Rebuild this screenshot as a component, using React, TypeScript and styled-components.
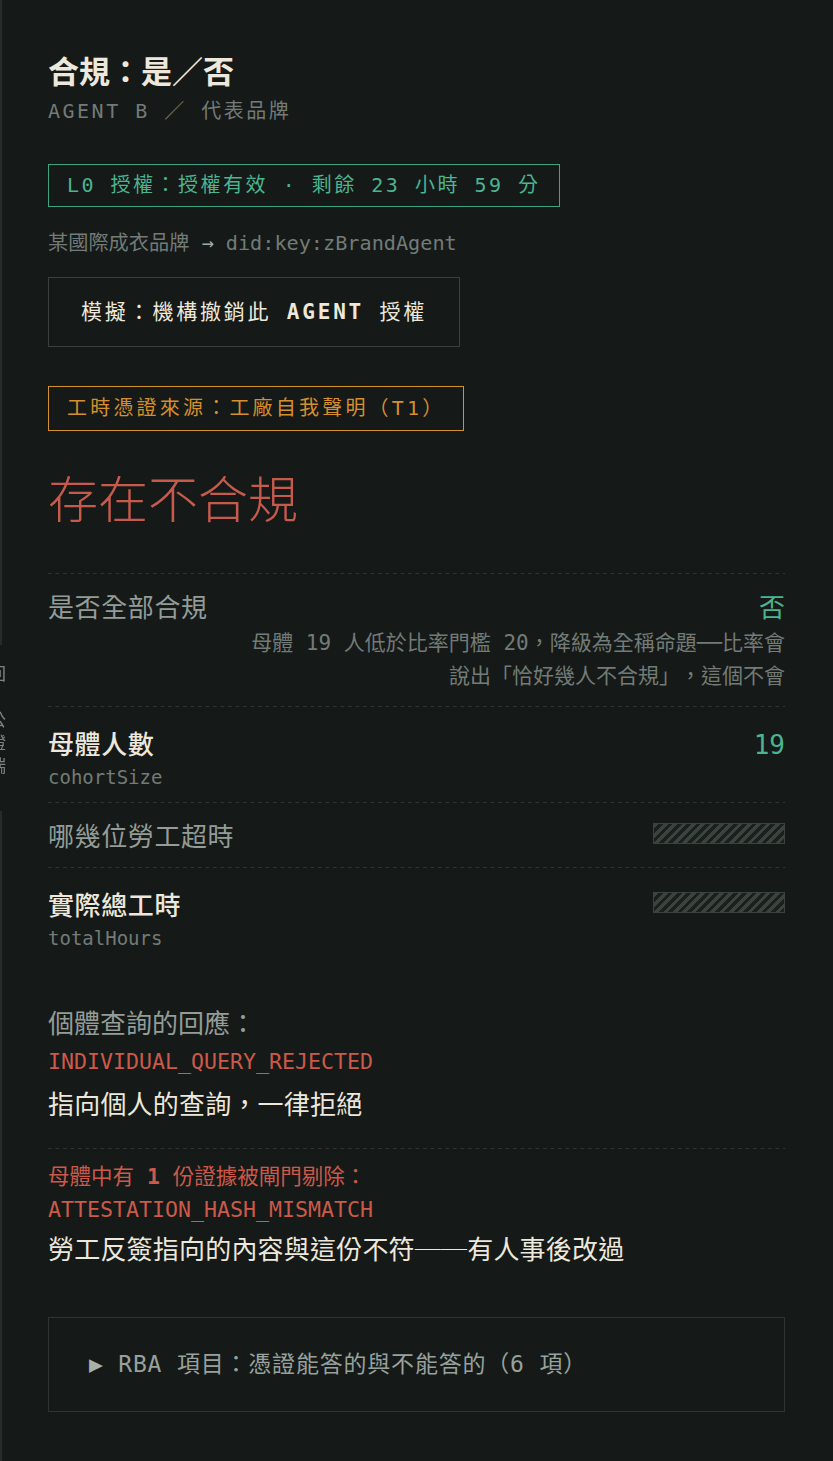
import styled, { createGlobalStyle } from 'styled-components'

const mono = `"DejaVu Sans Mono", "Noto Sans CJK TC", monospace`
const cjk = `"Noto Sans CJK TC", "Noto Sans", sans-serif`

const c = {
  bg: '#151918',
  text: '#ede8db',
  muted: '#939c97',
  dim: '#737b77',
  green: '#4cb48f',
  orange: '#d68f2c',
  red: '#cc5a49',
  dash: '#2f3533',
  border: '#3a403e',
}

const GlobalStyle = createGlobalStyle`
  * { box-sizing: border-box; }
  html, body { margin: 0; padding: 0; background: ${c.bg}; }
  body {
    font-family: ${mono};
    color: ${c.text};
    text-spacing-trim: space-all;
  }
`

const SideRail = styled.aside`
  position: fixed;
  left: 0;
  top: 0;
  bottom: 0;
  width: 2px;
  background: #272c2a;
`

const RailTab = styled.button`
  position: fixed;
  left: -13px;
  top: 645px;
  width: 21px;
  height: 166px;
  padding: 20px 0 0;
  border: 0;
  background: ${c.bg};
  color: #7d8581;
  font: 17px/21px ${cjk};
  letter-spacing: 6px;
  writing-mode: vertical-rl;
  text-align: start;
`

const RailDot = styled.span`
  color: ${c.red};
`

const Page = styled.main`
  display: flex;
  flex-direction: column;
  padding: 52px 48px 60px;
`

const Title = styled.h1`
  margin: 0;
  font-size: 31px;
  line-height: 40px;
  font-weight: 700;
  color: ${c.text};
`

const Subtitle = styled.div`
  margin-top: 5px;
  font-size: 20px;
  line-height: 28px;
  letter-spacing: 2.5px;
  color: ${c.dim};
`

const Badge = styled.div<{ $tone: 'green' | 'orange' }>`
  align-self: flex-start;
  margin-top: 39px;
  padding: ${p => (p.$tone === 'green' ? '8px 18px' : '9px 18px')};
  border: 1px solid ${p => (p.$tone === 'green' ? '#3fa384' : '#d4922d')};
  color: ${p => (p.$tone === 'green' ? c.green : c.orange)};
  font-size: 20px;
  line-height: 25px;
  letter-spacing: ${p => (p.$tone === 'green' ? 2.5 : 3.2)}px;
`

const Identity = styled.div`
  margin-top: 21px;
  font-size: 20.2px;
  line-height: 30px;
  color: ${c.dim};
`

const Arrow = styled.span`
  color: #a2aaa6;
`

const RevokeButton = styled.button`
  align-self: flex-start;
  margin-top: 19px;
  padding: 20px 32px;
  background: transparent;
  border: 1px solid ${c.border};
  color: ${c.text};
  font-family: ${mono};
  font-size: 21px;
  line-height: 28px;
  letter-spacing: 2.8px;
  cursor: pointer;
`

const Strong = styled.b`
  font-weight: 700;
`

const Verdict = styled.div`
  margin-top: 38px;
  font-size: 50px;
  line-height: 64px;
  font-weight: 300;
  color: #c65a4b;
`

const Rows = styled.section`
  margin-top: 40px;
  display: flex;
  flex-direction: column;
`

const dashedTop = `
  background-image: linear-gradient(to right, ${c.dash} 4px, transparent 4px);
  background-size: 7.5px 1px;
  background-repeat: repeat-x;
  background-position: left top;
`

const Row = styled.div<{ $keyed?: boolean }>`
  ${dashedTop}
  padding: ${p => (p.$keyed ? '20px 0 11px' : '16px 0 11px')};
  display: flex;
  flex-direction: column;
`

const RowHead = styled.div`
  display: flex;
  justify-content: space-between;
  align-items: flex-start;
`

const RowLabel = styled.div<{ $strong?: boolean }>`
  font-size: 26px;
  line-height: 38px;
  letter-spacing: 0.6px;
  font-weight: ${p => (p.$strong ? 500 : 400)};
  color: ${p => (p.$strong ? c.text : c.muted)};
`

const RowKey = styled.div`
  font-size: 19px;
  line-height: 27px;
  color: ${c.dim};
`

const RowValue = styled.div`
  font-size: 26px;
  line-height: 38px;
  color: ${c.green};
`

const Redacted = styled.div`
  margin-top: 5px;
  width: 132px;
  height: 21px;
  border: 1px solid #3b433f;
  background: repeating-linear-gradient(135deg, #3b433f 0 3.3px, #1b201e 3.3px 6.6px);
`

const RowNote = styled.p`
  margin: 0 0 2px;
  text-align: right;
  font-size: 21px;
  line-height: 33px;
  color: ${c.dim};
`

const Dash = styled.span`
  font-family: ${cjk};
`

const Block = styled.section<{ $divided?: boolean }>`
  display: flex;
  flex-direction: column;
  ${p => (p.$divided ? dashedTop : '')}
  margin-top: ${p => (p.$divided ? 0 : 42)}px;
  padding: ${p => (p.$divided ? '15px 0 0' : '0 0 25px')};
`

const BlockLabel = styled.div<{ $alert?: boolean }>`
  font-size: ${p => (p.$alert ? 21.5 : 26)}px;
  line-height: ${p => (p.$alert ? 28 : 38)}px;
  color: ${p => (p.$alert ? c.red : c.muted)};
`

const Code = styled.code`
  margin-top: 4px;
  font-family: ${mono};
  font-size: 21.6px;
  line-height: 30px;
  color: ${c.red};
`

const BlockText = styled.div<{ $gap?: number }>`
  margin-top: ${p => p.$gap ?? 10}px;
  font-size: 26px;
  line-height: 36px;
  letter-spacing: 0.2px;
  color: ${c.text};
`

const Disclosure = styled.details`
  margin-top: 49px;
  border: 1px solid #2e3432;
`

const DisclosureSummary = styled.summary`
  list-style: none;
  padding: 31px 40px 32px;
  font-size: 23px;
  line-height: 30px;
  letter-spacing: 0.8px;
  color: #98a19c;
  cursor: pointer;

  &::-webkit-details-marker {
    display: none;
  }

  &::before {
    content: '▶ ';
    color: #a8b0ab;
  }
`

export default function App() {
  return (
    <>
      <GlobalStyle />
      <SideRail />
      <RailTab>
        回<RailDot>・</RailDot>公證端
      </RailTab>
      <Page>
        <Title>合規：是／否</Title>
        <Subtitle>AGENT B ／ 代表品牌</Subtitle>

        <Badge $tone="green">L0 授權：授權有效 · 剩餘 23 小時 59 分</Badge>
        <Identity>
          某國際成衣品牌 <Arrow>→</Arrow> did:key:zBrandAgent
        </Identity>
        <RevokeButton type="button">
          模擬：機構撤銷此 <Strong>AGENT</Strong> 授權
        </RevokeButton>
        <Badge $tone="orange">工時憑證來源：工廠自我聲明（T1）</Badge>

        <Verdict>存在不合規</Verdict>

        <Rows>
          <Row>
            <RowHead>
              <RowLabel>是否全部合規</RowLabel>
              <RowValue>否</RowValue>
            </RowHead>
            <RowNote>
              母體 19 人低於比率門檻 20，降級為全稱命題──比率會
              <br />
              說出「恰好幾人不合規」，這個不會
            </RowNote>
          </Row>
          <Row $keyed>
            <RowHead>
              <div>
                <RowLabel $strong>母體人數</RowLabel>
                <RowKey>cohortSize</RowKey>
              </div>
              <RowValue>19</RowValue>
            </RowHead>
          </Row>
          <Row>
            <RowHead>
              <RowLabel>哪幾位勞工超時</RowLabel>
              <Redacted />
            </RowHead>
          </Row>
          <Row $keyed>
            <RowHead>
              <div>
                <RowLabel $strong>實際總工時</RowLabel>
                <RowKey>totalHours</RowKey>
              </div>
              <Redacted />
            </RowHead>
          </Row>
        </Rows>

        <Block>
          <BlockLabel>個體查詢的回應：</BlockLabel>
          <Code>INDIVIDUAL_QUERY_REJECTED</Code>
          <BlockText>指向個人的查詢，一律拒絕</BlockText>
        </Block>
        <Block $divided>
          <BlockLabel $alert>
            母體中有 <Strong>1</Strong> 份證據被閘門剔除：
          </BlockLabel>
          <Code>ATTESTATION_HASH_MISMATCH</Code>
          <BlockText $gap={5}>
            勞工反簽指向的內容與這份不符<Dash>──</Dash>有人事後改過
          </BlockText>
        </Block>

        <Disclosure>
          <DisclosureSummary>RBA 項目：憑證能答的與不能答的（6 項）</DisclosureSummary>
        </Disclosure>
      </Page>
    </>
  )
}
